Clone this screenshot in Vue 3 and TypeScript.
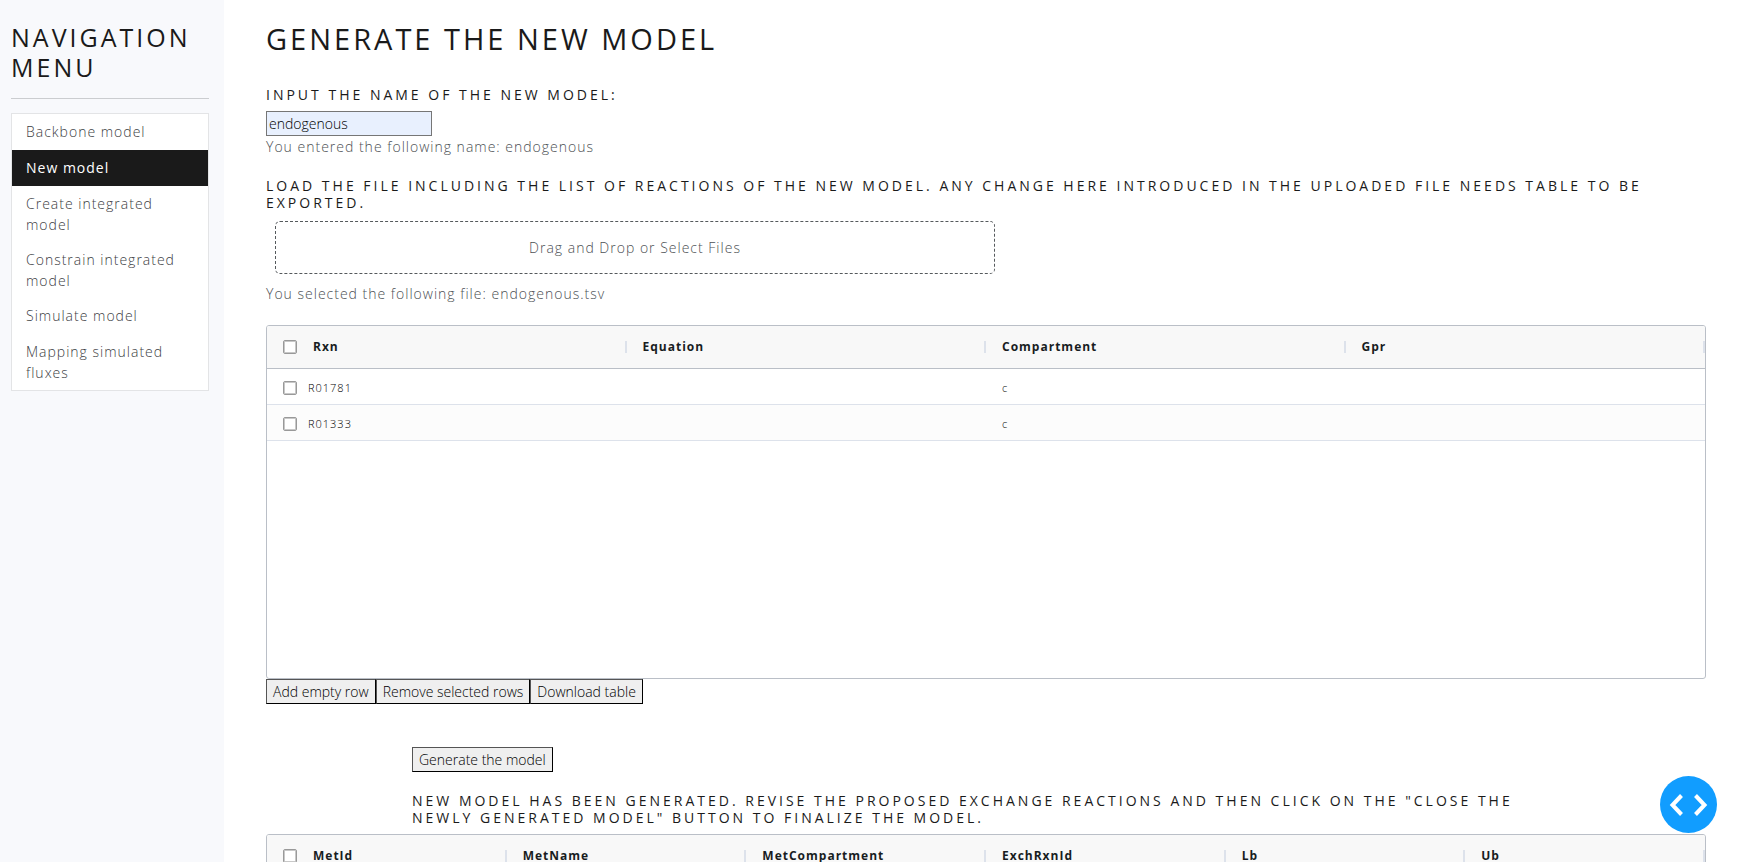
<script setup lang="ts">
import { ref } from 'vue'

interface Reaction {
  rxn: string
  equation: string
  compartment: string
  gpr: string
  selected: boolean
}

const modelName = ref('endogenous')
const fileName = ref('endogenous.tsv')

const pages = [
  'Backbone model',
  'New model',
  'Create integrated model',
  'Constrain integrated model',
  'Simulate model',
  'Mapping simulated fluxes',
]
const activePage = ref('New model')

const reactionColumns = ['Rxn', 'Equation', 'Compartment', 'Gpr']
const exchangeColumns = ['MetId', 'MetName', 'MetCompartment', 'ExchRxnId', 'Lb', 'Ub']

const reactions = ref<Reaction[]>([
  { rxn: 'R01781', equation: '', compartment: 'c', gpr: '', selected: false },
  { rxn: 'R01333', equation: '', compartment: 'c', gpr: '', selected: false },
])

function addRow(): void {
  reactions.value.push({ rxn: '', equation: '', compartment: '', gpr: '', selected: false })
}

function removeSelected(): void {
  reactions.value = reactions.value.filter((row) => !row.selected)
}

function toggleAll(event: Event): void {
  const checked = (event.target as HTMLInputElement).checked
  reactions.value.forEach((row) => (row.selected = checked))
}

function onFile(event: Event): void {
  const file = (event.target as HTMLInputElement).files?.[0]
  if (file) fileName.value = file.name
}
</script>

<template>
  <div class="app">
    <aside class="sidebar">
      <h2 class="sidebar-title">Navigation menu</h2>
      <hr class="rule" />
      <nav class="nav">
        <a
          v-for="page in pages"
          :key="page"
          href="#"
          class="nav-link"
          :class="{ active: page === activePage }"
          @click.prevent="activePage = page"
          >{{ page }}</a
        >
      </nav>
    </aside>

    <main class="content">
      <h1 class="title">Generate the new model</h1>

      <label class="heading" for="model-name">Input the name of the new model:</label>
      <input id="model-name" v-model="modelName" class="name-input" type="text" />
      <p class="note">You entered the following name: {{ modelName }}</p>

      <h2 class="heading load-heading">
        Load the file including the list of reactions of the new model. Any change here introduced
        in the uploaded file needs table to be exported.
      </h2>
      <label class="dropzone">
        Drag and Drop or Select Files
        <input class="file-input" type="file" @change="onFile" />
      </label>
      <p class="note">You selected the following file: {{ fileName }}</p>

      <section class="grid reactions">
        <table class="table">
          <thead>
            <tr>
              <th v-for="(column, i) in reactionColumns" :key="column" scope="col">
                <div class="head-cell">
                  <input
                    v-if="i === 0"
                    class="check"
                    type="checkbox"
                    aria-label="Select all reactions"
                    @change="toggleAll"
                  />
                  <span class="head-label">{{ column }}</span>
                  <span class="separator"></span>
                </div>
              </th>
            </tr>
          </thead>
          <tbody>
            <tr v-for="(row, i) in reactions" :key="i">
              <td>
                <label class="row-label">
                  <input v-model="row.selected" class="check" type="checkbox" />
                  {{ row.rxn }}
                </label>
              </td>
              <td>{{ row.equation }}</td>
              <td>{{ row.compartment }}</td>
              <td>{{ row.gpr }}</td>
            </tr>
          </tbody>
        </table>
      </section>
      <div class="actions">
        <button class="btn" type="button" @click="addRow">Add empty row</button>
        <button class="btn" type="button" @click="removeSelected">Remove selected rows</button>
        <button class="btn" type="button">Download table</button>
      </div>

      <div class="generate">
        <button class="btn" type="button">Generate the model</button>
        <h2 class="heading result">
          New model has been generated. Revise the proposed exchange reactions and then click on the
          "Close the newly generated model" button to finalize the model.
        </h2>
      </div>

      <section class="grid exchanges">
        <table class="table">
          <thead>
            <tr>
              <th v-for="(column, i) in exchangeColumns" :key="column" scope="col">
                <div class="head-cell">
                  <input
                    v-if="i === 0"
                    class="check"
                    type="checkbox"
                    aria-label="Select all exchange reactions"
                  />
                  <span class="head-label">{{ column }}</span>
                  <span class="separator"></span>
                </div>
              </th>
            </tr>
          </thead>
        </table>
      </section>
    </main>

    <button class="debug" type="button" aria-label="Toggle debug menu">
      <svg viewBox="0 0 57 57" width="57" height="57" aria-hidden="true">
        <path d="M21.5 19.500 12.500 29 21.500 38.500" />
        <path d="M35.500 19.500 44.500 29 35.500 38.500" />
      </svg>
    </button>
  </div>
</template>

<style>
html,
body {
  margin: 0;
  background: #fff;
}
</style>

<style scoped>
.app,
.app * {
  box-sizing: border-box;
}

.app {
  display: flex;
  height: 100vh;
  font-family: 'Open Sans', 'Noto Sans', sans-serif;
  font-size: 14px;
  font-weight: 300;
  line-height: 21px;
  letter-spacing: 1px;
  color: #55595c;
}

.sidebar {
  flex: none;
  width: 224px;
  padding: 22px 15px 0 11px;
  background: #f8f9fc;
}

.sidebar-title {
  margin: 0;
  font-size: 25px;
  font-weight: 400;
  line-height: 30px;
  letter-spacing: 3px;
  text-transform: uppercase;
  color: #1a1a1a;
}

.rule {
  margin: 16px 0 14px;
  border: 0;
  border-top: 1px solid #cbcdd0;
}

.nav {
  display: flex;
  flex-direction: column;
  border: 1px solid #e3e4e6;
  background: #fff;
}

.nav-link {
  min-height: 36px;
  padding: 7px 14px;
  color: #3c4043;
  text-decoration: none;
}

.nav-link.active {
  background: #1a1a1a;
  color: #fff;
  font-weight: 400;
}

.content {
  flex: 1;
  min-width: 0;
  padding: 22px 35px 0 42px;
  overflow-y: auto;
  scrollbar-width: none;
}

.title {
  margin: 0 0 30px;
  font-size: 29px;
  font-weight: 400;
  line-height: 34px;
  letter-spacing: 3px;
  text-transform: uppercase;
  color: #1a1a1a;
}

.heading {
  display: block;
  margin: 0;
  font-size: 14px;
  font-weight: 400;
  line-height: 17px;
  letter-spacing: 3px;
  text-transform: uppercase;
  color: #1a1a1a;
}

.name-input {
  display: block;
  width: 166px;
  height: 25px;
  margin-top: 8px;
  padding: 0 2px 1px;
  border: 1px solid #767676;
  border-radius: 0;
  background: #e8f0fe;
  font: inherit;
  color: #000;
}

.note {
  margin: 0;
  color: #4c5054;
}

.load-heading {
  margin-top: 20px;
}

.dropzone {
  display: block;
  width: 50%;
  margin: 10px 9px 9px;
  padding: 15px 0;
  border: 1px dashed #55595c;
  border-radius: 5px;
  text-align: center;
  color: #4c5054;
}

.file-input {
  display: none;
}

.grid {
  overflow: hidden;
  border: 1px solid #babfc7;
  border-radius: 3px;
  background: #fff;
  font-size: 12px;
  color: #181d1f;
}

.reactions {
  height: 354px;
  margin-top: 21px;
}

.exchanges {
  height: 354px;
  margin-top: 8px;
}

.table {
  width: 100%;
  table-layout: fixed;
  border-collapse: collapse;
}

th {
  height: 42px;
  padding: 0;
  border-bottom: 1px solid #babfc7;
  background: #f8f8f8;
  font-weight: 700;
  text-align: left;
}

.head-cell {
  display: flex;
  align-items: center;
  padding-left: 16px;
}

.head-label {
  flex: 1;
}

.check {
  flex: none;
  appearance: none;
  width: 14px;
  height: 14px;
  margin: 0;
  border: 1px solid #999;
  border-radius: 2px;
  background: #fff;
  box-shadow: inset 0 0 0 1px #c8c8c8;
}

.check:checked {
  background: #2196f3;
}

.head-cell .check {
  margin-right: 16px;
}

.separator {
  width: 2px;
  height: 12px;
  background: #dde2eb;
}

td {
  height: 36px;
  padding: 3px 16px 0;
  border-bottom: 1px solid #dde2eb;
  font-size: 11px;
  color: #000;
}

tbody tr:nth-child(even) {
  background: #fcfcfc;
}

.row-label {
  display: flex;
  align-items: center;
  gap: 11px;
}

.actions {
  display: flex;
}

.btn {
  height: 25px;
  padding: 0 6px 1px;
  border: 1px solid;
  border-color: #555 #000 #000 #555;
  border-radius: 0;
  background: #efefef;
  font: inherit;
  color: #000;
}

.generate {
  display: flex;
  flex-direction: column;
  align-items: flex-start;
  gap: 20px;
  margin: 43px 146px 0;
}

.debug {
  position: fixed;
  right: 24px;
  bottom: 29px;
  display: grid;
  width: 57px;
  height: 57px;
  padding: 0;
  border: 0;
  border-radius: 50%;
  background: #119dff;
}

.debug path {
  fill: none;
  stroke: #fff;
  stroke-width: 4;
}
</style>
